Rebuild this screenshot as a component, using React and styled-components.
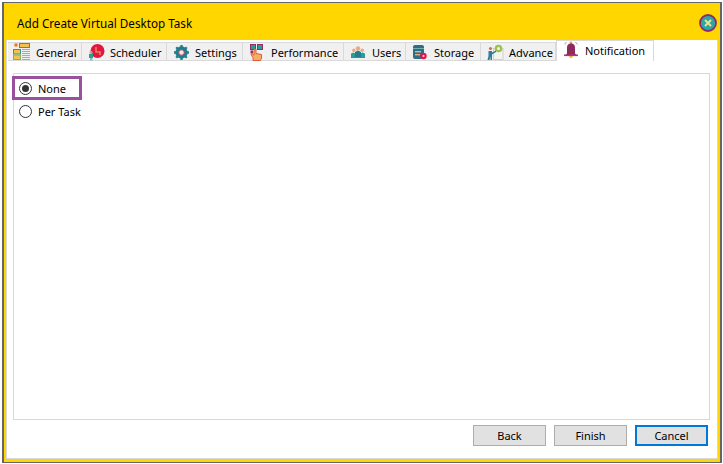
import React from "react";
import styled, { createGlobalStyle } from "styled-components";

const Global = createGlobalStyle`
  html, body { margin: 0; padding: 0; background: #fff; }
  body { font-family: "Noto Sans", "Open Sans", sans-serif; color: #000; }
`;

const GeneralIcon = () => (
  <svg width="18" height="18" viewBox="0 0 18 18">
    <circle cx="3" cy="2" r="1.8" fill="#ee6a50" stroke="#f2c14e" strokeWidth=".6" />
    <rect x="6.5" y="0.5" width="10" height="4" fill="#f2c14e" stroke="#2f9a9a" />
    <rect x="0.5" y="6.5" width="7" height="4.5" fill="#f2c14e" stroke="#2f9a9a" />
    <rect x="0.5" y="12" width="7" height="4.5" fill="#f2c14e" stroke="#8db255" />
    <path d="M9 6.5h8M9 8.5h8M9 10.5h8M9 12.5h8M9 14.5h8M9 16.5h8" stroke="#c797c9" strokeWidth="1" />
  </svg>
);
const SchedulerIcon = () => (
  <svg width="17" height="17" viewBox="0 0 17 17">
    <circle cx="9.5" cy="7" r="7" fill="#e0173f" />
    <path d="M8 3v5h4v3" stroke="#ee8060" strokeWidth="1.6" fill="none" />
    <circle cx="3" cy="8.5" r="1.6" fill="#e0a080" />
    <rect x="1" y="10" width="4" height="4" fill="#2f9a9a" />
    <rect x="2" y="14" width="2.5" height="2.5" fill="#7cc4c4" />
  </svg>
);
const SettingsIcon = () => (
  <svg width="15" height="15" viewBox="0 0 17 17">
    <circle cx="8.5" cy="8.5" r="5" fill="none" stroke="#1f7f8c" strokeWidth="4" />
    <path d="M8.5 0v3M8.5 14v3M0 8.5h3M14 8.5h3M2.5 2.5l2 2M12.5 12.5l2 2M14.5 2.5l-2 2M4.5 12.5l-2 2" stroke="#1f7f8c" strokeWidth="2.6" />
    <circle cx="8.5" cy="8.5" r="3.2" fill="#f4ece4" stroke="#a8456e" strokeWidth="1.2" />
  </svg>
);
const PerformanceIcon = () => (
  <svg width="14" height="17" viewBox="0 0 14 17">
    <rect x="0.5" y="0.5" width="5" height="5" fill="#2f9a9a" stroke="#8e2f66" />
    <rect x="7.5" y="0.5" width="5" height="5" fill="#2f9a9a" stroke="#8e2f66" />
    <rect x="0.5" y="6.5" width="2.5" height="3" fill="#8e2f66" />
    <path d="M3 16.5v-3L1 10.5l1.2-.8L4 11.2V5h2v4.5l5.5 1v3.5l-1 2.5z" fill="#f4b060" stroke="#d9502f" strokeWidth=".9" />
  </svg>
);
const UsersIcon = () => (
  <svg width="14" height="12" viewBox="0 0 14 12">
    <circle cx="7" cy="2.4" r="2.2" fill="#eea880" />
    <circle cx="2.8" cy="4.2" r="1.7" fill="#eea880" />
    <circle cx="11.2" cy="4.2" r="1.7" fill="#eea880" />
    <path d="M0 11V7.5l2.5-1 2 1V11zM9.5 11V7.5l2-1 2.5 1V11z" fill="#2f9a9a" />
    <path d="M4 11V6l3-1.5L10 6v5z" fill="#1f7f8c" />
    <path d="M0 11.5h14" stroke="#d0467c" />
  </svg>
);
const StorageIcon = () => (
  <svg width="14" height="15" viewBox="0 0 14 15">
    <rect x="0" y="0" width="11" height="14" rx="2" fill="#2f6d85" />
    <rect x="0" y="3" width="11" height="1" fill="#6fb0b8" />
    <rect x="2" y="6" width="6" height="1.4" fill="#e8b080" />
    <rect x="2" y="9" width="5" height="1.4" fill="#e8b080" />
    <circle cx="10.5" cy="11" r="3.2" fill="#e0164c" />
    <circle cx="10.5" cy="11" r="1" fill="#f6e8d8" />
  </svg>
);
const AdvanceIcon = () => (
  <svg width="17" height="16" viewBox="0 0 17 16">
    <rect x="6.5" y="4.5" width="9.5" height="11" fill="#f4f4ee" stroke="#c9c9bd" strokeWidth=".8" />
    <circle cx="11.5" cy="4.5" r="3.8" fill="#9bc24f" />
    <circle cx="11.5" cy="4.5" r="1.5" fill="#f4f4ee" />
    <circle cx="3.5" cy="4.5" r="1.6" fill="#d0724f" />
    <path d="M0.5 16l1-4V7h3.5v1.5L9 6.5V8L5 10.5V16H3.5v-3.5L2.5 16z" fill="#2c7f95" />
  </svg>
);
const BellIcon = () => (
  <svg width="16" height="18" viewBox="0 0 16 18">
    <path d="M1.5 3.5L3.5 1M14.5 3.5L12.5 1" stroke="#d0a8b0" strokeWidth="1.2" />
    <circle cx="8" cy="2" r="1.4" fill="#e8a33c" />
    <path d="M4 12.5V6.5C4 4 5.5 2.5 8 2.5s4 1.500 4 4v6l1.500 1.500h-11z" fill="#8f2a5e" />
    <rect x="1" y="13.500" width="14" height="1.600" fill="#a93a6c" />
    <path d="M6 15.100h4a2 2 0 0 1-4 0z" fill="#edb13c" />
  </svg>
);

const tabs = [
  { label: "General", width: 74, icon: <GeneralIcon /> },
  { label: "Scheduler", width: 85, icon: <SchedulerIcon /> },
  { label: "Settings", width: 76, icon: <SettingsIcon /> },
  { label: "Performance", width: 101, icon: <PerformanceIcon /> },
  { label: "Users", width: 62, icon: <UsersIcon /> },
  { label: "Storage", width: 75, icon: <StorageIcon /> },
  { label: "Advance", width: 75, icon: <AdvanceIcon /> },
  { label: "Notification", width: 98, icon: <BellIcon />, active: true },
];

export default function App() {
  return (
    <>
      <Global />
      <Window>
        <TitleBar>
          <Title>Add Create Virtual Desktop Task</Title>
          <CloseButton>
            <svg width="18" height="18" viewBox="0 0 18 18">
              <circle cx="9" cy="9" r="8" fill="#2aa7a7" stroke="#8f2a6a" strokeWidth="1.8" />
              <path d="M6 6l6 6M12 6l-6 6" stroke="#f8e08a" strokeWidth="1.8" />
            </svg>
          </CloseButton>
        </TitleBar>
        <Body>
          <TabBar>
            {tabs.map((t) => (
              <Tab key={t.label} $active={t.active} $width={t.width}>
                <TabIcon>{t.icon}</TabIcon>
                {t.label}
              </Tab>
            ))}
          </TabBar>
          <Panel>
            <RadioRow $highlight>
              <Radio $checked />
              None
            </RadioRow>
            <RadioRow>
              <Radio />
              Per Task
            </RadioRow>
          </Panel>
          <Footer>
            <Button>Back</Button>
            <Button>Finish</Button>
            <Button $primary>Cancel</Button>
          </Footer>
        </Body>
      </Window>
    </>
  );
}

const Window = styled.div`
  box-sizing: border-box;
  width: 720px;
  height: 461px;
  margin: 2px 0 0 2px;
  background: #ffd600;
  border: solid #666;
  border-width: 1px 2px 1px 2px;
  display: flex;
  flex-direction: column;
`;

const TitleBar = styled.div`
  height: 37px;
  flex: none;
  display: flex;
  align-items: center;
  justify-content: space-between;
  padding: 3px 3px 0 13px;
  box-sizing: border-box;
`;

const Title = styled.div`
  font-size: 11.7px;
  color: #000;
`;

const CloseButton = styled.div`
  width: 18px;
  height: 18px;
  display: flex;
`;

const Body = styled.div`
  flex: 1;
  margin: 0 2px 3px 2px;
  background: #fff;
  border: solid #d8d8d8;
  border-width: 0 1px 1px 1px;
  display: flex;
  flex-direction: column;
  min-height: 0;
`;

const TabBar = styled.div`
  height: 21px;
  flex: none;
  display: flex;
  align-items: flex-end;
  padding-left: 1px;
`;

const Tab = styled.div`
  box-sizing: border-box;
  width: ${(p) => p.$width}px;
  height: ${(p) => (p.$active ? 21 : 19)}px;
  flex: none;
  display: flex;
  align-items: center;
  padding: ${(p) => (p.$active ? "0 0 2px 2px" : "1px 0 0 2px")};
  font-size: 11px;
  color: #000;
  white-space: nowrap;
  background: ${(p) => (p.$active ? "#fff" : "#f0f0f0")};
  border: 1px solid #d9d9d9;
  border-left-width: ${(p) => (p.$active ? 1 : 0)}px;
  border-bottom-width: ${(p) => (p.$active ? 0 : 1)}px;
`;

const TabIcon = styled.span`
  width: 24px;
  flex: none;
  display: flex;
  align-items: center;
  justify-content: center;
  margin-right: 2px;
`;

const Panel = styled.div`
  box-sizing: border-box;
  flex: none;
  height: 347px;
  margin: 12px 7px 0 6px;
  border: 1px solid #d8d8d8;
  padding: 2px 0 0 0;
  display: flex;
  flex-direction: column;
`;

const RadioRow = styled.div`
  box-sizing: border-box;
  width: 70px;
  height: ${(p) => (p.$highlight ? 24 : 25)}px;
  margin: ${(p) => (p.$highlight ? 0 : -1)}px 0 0 -2px;
  display: flex;
  align-items: center;
  gap: 6px;
  padding-left: 4px;
  font-size: 11px;
  color: #000;
  white-space: nowrap;
  border: 3px solid ${(p) => (p.$highlight ? "#9b4f9f" : "transparent")};
`;

const Radio = styled.span`
  box-sizing: border-box;
  width: 13px;
  height: 13px;
  flex: none;
  border-radius: 50%;
  border: 1px solid #333;
  background: #fff;
  display: flex;
  align-items: center;
  justify-content: center;
  &::after {
    content: "";
    display: ${(p) => (p.$checked ? "block" : "none")};
    width: 7px;
    height: 7px;
    border-radius: 50%;
    background: #333;
  }
`;

const Footer = styled.div`
  display: flex;
  justify-content: flex-end;
  gap: 8px;
  padding: 5px 9px 0 0;
`;

const Button = styled.div`
  box-sizing: border-box;
  width: 73px;
  height: 21px;
  display: flex;
  align-items: center;
  justify-content: center;
  font-size: 11px;
  color: #000;
  background: #e1e1e1;
  border: ${(p) => (p.$primary ? "2px solid #0078d7" : "1px solid #adadad")};
`;
